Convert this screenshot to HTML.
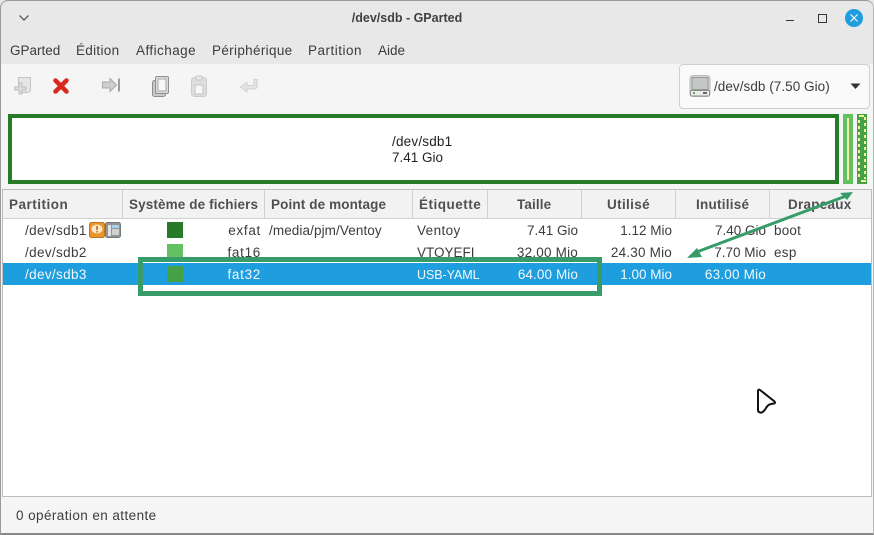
<!DOCTYPE html>
<html><head><meta charset="utf-8">
<style>
html,body{margin:0;padding:0;background:#fff}
#w{position:relative;width:874px;height:535px;overflow:hidden;background:#f5f5f5;font-family:"Liberation Sans",sans-serif;font-size:13.5px;color:#3c3c3c}
#w div,#w span{position:absolute;white-space:nowrap}
.t{line-height:16px;height:16px}
.r{text-align:right}
.h{font-weight:bold;color:#505050;font-size:13.5px;letter-spacing:.12px}
.s{border-right:1px solid #d0d0d0;top:190px;height:28px;width:0}
.w{color:#f4f8fb}
</style></head><body>
<div id="w">
<div style="left:0;top:0;width:874px;height:64px;background:#e8e8e8"></div>
<div style="left:0;top:64px;width:874px;height:471px;background:#f5f5f5"></div>

<svg style="position:absolute;left:17px;top:13px" width="14" height="10"><path d="M2.5 2.5L7 7L11.5 2.5" fill="none" stroke="#4a4a4a" stroke-width="1.2"/></svg>
<div class="t" style="left:0;top:10px;width:814px;text-align:center;font-weight:bold;font-size:12.5px;color:#404040">/dev/sdb - GParted</div>
<div style="left:786px;top:20px;width:8px;height:1px;background:#333"></div>
<div style="left:818px;top:14px;width:7px;height:7px;border:1px solid #333"></div>
<svg style="position:absolute;left:845px;top:9px" width="18" height="18"><circle cx="9" cy="9" r="9" fill="#1e9ede"/><path d="M5.5 5.5L12.5 12.5M12.5 5.5L5.5 12.5" stroke="#fff" stroke-width="1.1"/></svg>

<div class="t" style="left:10px;top:43px">GParted</div>
<div class="t" style="left:76px;top:43px;letter-spacing:.3px">Édition</div>
<div class="t" style="left:136px;top:43px;letter-spacing:.45px">Affichage</div>
<div class="t" style="left:212px;top:43px;letter-spacing:.33px">Périphérique</div>
<div class="t" style="left:308px;top:43px;letter-spacing:.5px">Partition</div>
<div class="t" style="left:378px;top:43px">Aide</div>

<svg style="position:absolute;left:12px;top:75px" width="20" height="20"><path d="M6.5 2.5H18.500V15.500C18 17 16 17.500 14 17.500H10V13.500H6.500Z" fill="#e6e6e6" stroke="#c4c4c4"/><path d="M7 8V12H2.500V15H7V19H10V15H14V12H10V8Z" fill="#dcdcdc" stroke="#bebebe"/></svg>
<svg style="position:absolute;left:52px;top:77px" width="18" height="18"><path d="M3.500 3.500L14.500 14.500M14.500 3.500L3.500 14.500" stroke="#d9281e" stroke-width="4.500" stroke-linecap="round"/></svg>
<svg style="position:absolute;left:101px;top:76px" width="20" height="18"><path d="M1.500 6H9V2.500L15.500 9L9 15.500V12H1.500Z" fill="#cfcfcf" stroke="#a8a8a8"/><rect x="17" y="2.500" width="2" height="13" fill="#9e9e9e"/></svg>
<svg style="position:absolute;left:151px;top:75px" width="20" height="23"><rect x="1.500" y="5.500" width="13" height="16" rx="2" fill="#c8c8c8" stroke="#8f8f8f"/><rect x="4.500" y="1.500" width="13" height="17" rx="1.500" fill="#dcdcdc" stroke="#8f8f8f"/><rect x="7" y="4" width="8" height="12" fill="#f7f7f7" stroke="#a8a8a8"/></svg>
<svg style="position:absolute;left:190px;top:75px" width="18" height="23"><rect x="1.500" y="2.500" width="15" height="19" rx="3" fill="#dedede" stroke="#cccccc"/><rect x="6" y="1" width="6" height="4" rx="1" fill="#ececec" stroke="#c4c4c4"/><rect x="5" y="10" width="8" height="9" fill="#f8f8f8" stroke="#c4c4c4"/></svg>
<svg style="position:absolute;left:239px;top:78px" width="20" height="16"><path d="M15 1.500H18V8C18 10 17 11 15 11H8V14L1.500 9L8 4.500V7.500H15Z" fill="#e4e4e4" stroke="#d0d0d0"/></svg>

<div style="left:679px;top:64px;width:189px;height:43px;background:#fafafa;border:1px solid #cfcfcf;border-radius:4px"></div>
<svg style="position:absolute;left:689px;top:75px" width="22" height="22"><rect x="1" y="0.500" width="20" height="21" rx="3" fill="#d4d4d4" stroke="#bbb"/><rect x="3" y="2.500" width="16" height="12" fill="#c4c8c4" stroke="#999"/><rect x="1" y="15" width="20" height="6.500" rx="1.500" fill="#8a8a8a"/><rect x="2" y="16" width="18" height="4.500" fill="#ececec"/><rect x="4" y="17" width="2" height="2" fill="#5cae4a"/><rect x="14" y="17" width="4" height="2" fill="#666"/></svg>
<div class="t" style="left:714px;top:79px;letter-spacing:.05px">/dev/sdb (7.50 Gio)</div>
<svg style="position:absolute;left:850px;top:83px" width="12" height="8"><path d="M0.500 0.500H10.500L5.500 6Z" fill="#333"/></svg>

<div style="left:8px;top:114px;width:823px;height:62px;background:#fff;border:4px solid #277a27"></div>
<div class="t" style="left:392px;top:134px;color:#222;letter-spacing:.2px">/dev/sdb1</div>
<div class="t" style="left:392px;top:150px;color:#222">7.41 Gio</div>
<div style="left:843px;top:114px;width:10px;height:70px;background:#62c262"></div>
<div style="left:847px;top:118px;width:2px;height:62px;background:#f6f0a0"></div>
<div style="left:857px;top:114px;width:10px;height:70px;background:#46a046"></div>
<svg style="position:absolute;left:857px;top:114px" width="10" height="70"><path d="M2 2H7M4 67H9" stroke="#f6f0a0" stroke-width="2"/><path d="M2 6V65" stroke="#f6f0a0" stroke-width="2" stroke-dasharray="3 3"/><path d="M8 3V65" stroke="#f6f0a0" stroke-width="2" stroke-dasharray="3 3"/></svg>

<div style="left:2px;top:189px;width:868px;height:306px;background:#fff;border:1px solid #bdbdbd"></div>
<div style="left:3px;top:190px;width:868px;height:28px;background:#f2f2f2;border-bottom:1px solid #d0d0d0"></div>
<div class="s" style="left:122px"></div>
<div class="s" style="left:264px"></div>
<div class="s" style="left:412px"></div>
<div class="s" style="left:487px"></div>
<div class="s" style="left:581px"></div>
<div class="s" style="left:675px"></div>
<div class="s" style="left:769px"></div>

<div class="t h" style="left:9px;top:197px;letter-spacing:.5px">Partition</div>
<div class="t h" style="left:129px;top:197px">Système de fichiers</div>
<div class="t h" style="left:271px;top:197px">Point de montage</div>
<div class="t h" style="left:419px;top:197px;letter-spacing:.5px">Étiquette</div>
<div class="t h" style="left:517px;top:197px">Taille</div>
<div class="t h" style="left:607px;top:197px;letter-spacing:.35px">Utilisé</div>
<div class="t h" style="left:696px;top:197px;letter-spacing:.25px">Inutilisé</div>
<div class="t h" style="left:788px;top:197px;letter-spacing:.25px">Drapeaux</div>

<div style="left:3px;top:263px;width:868px;height:22px;background:#1e9ede"></div>

<div class="t" style="left:25px;top:223px;letter-spacing:.35px">/dev/sdb1</div>
<svg style="position:absolute;left:89px;top:222px" width="33" height="16"><rect x="0.500" y="0.500" width="15" height="15" rx="2" fill="#e9952c" stroke="#c07518"/><ellipse cx="8" cy="7" rx="5.500" ry="4.500" fill="#f8e8c8"/><rect x="7.300" y="4" width="1.500" height="4" fill="#c05a10"/><rect x="7.300" y="9" width="1.500" height="1.500" fill="#c05a10"/><rect x="16.500" y="0.500" width="15" height="15" rx="2" fill="#8d9599" stroke="#70787c"/><rect x="19" y="3" width="3" height="11" fill="#e4e4e4"/><rect x="23" y="3" width="7" height="3" fill="#a8d0e6"/><rect x="23" y="7" width="7" height="6" fill="#d0d0d0"/></svg>
<div class="t" style="left:25px;top:245px;letter-spacing:.35px">/dev/sdb2</div>
<div class="t w" style="left:25px;top:267px;letter-spacing:.35px">/dev/sdb3</div>

<div style="left:167px;top:222px;width:16px;height:16px;background:#277a27"></div>
<div style="left:167px;top:244px;width:16px;height:16px;background:#62c262"></div>
<div style="left:167px;top:266px;width:16px;height:16px;background:#46a046"></div>

<div class="t r" style="left:200px;width:61px;top:223px;letter-spacing:.7px">exfat</div>
<div class="t r" style="left:200px;width:61px;top:245px;letter-spacing:.7px">fat16</div>
<div class="t r w" style="left:200px;width:61px;top:267px;letter-spacing:.7px">fat32</div>

<div class="t" style="left:269px;top:223px;letter-spacing:.1px">/media/pjm/Ventoy</div>

<div class="t" style="left:417px;top:223px;letter-spacing:.4px">Ventoy</div>
<div class="t" style="left:417px;top:245px">VTOYEFI</div>
<div class="t w" style="left:417px;top:267px;font-size:12.5px;letter-spacing:-.05px">USB-YAML</div>

<div class="t r" style="left:490px;width:88px;top:223px">7.41 Gio</div>
<div class="t r" style="left:490px;width:88px;top:245px;letter-spacing:.2px">32.00 Mio</div>
<div class="t r w" style="left:490px;width:88px;top:267px;letter-spacing:.1px">64.00 Mio</div>

<div class="t r" style="left:584px;width:88px;top:223px">1.12 Mio</div>
<div class="t r" style="left:584px;width:88px;top:245px;letter-spacing:.2px">24.30 Mio</div>
<div class="t r w" style="left:584px;width:88px;top:267px">1.00 Mio</div>

<div class="t r" style="left:678px;width:88px;top:223px">7.40 Gio</div>
<div class="t r" style="left:678px;width:88px;top:245px">7.70 Mio</div>
<div class="t r w" style="left:678px;width:88px;top:267px;letter-spacing:.2px">63.00 Mio</div>

<div class="t" style="left:774px;top:223px;letter-spacing:.2px">boot</div>
<div class="t" style="left:774px;top:245px;letter-spacing:.3px">esp</div>

<div style="left:138px;top:257px;width:454px;height:29px;border:5px solid #379c69"></div>

<svg style="position:absolute;left:680px;top:186px" width="180" height="80"><path d="M14 67L166 10" stroke="#379c69" stroke-width="3"/><path d="M7 72L17 62L22 71Z" fill="#379c69"/><path d="M173 6L160 7L167 14Z" fill="#379c69"/></svg>

<svg style="position:absolute;left:752px;top:385px" width="30" height="32"><path d="M6 6Q6 4 8 5L22 16Q24 18 22 18.500C18 19 16 19.500 14 23C12 26.500 10 28 8 27.500Q6 27 6 25Z" fill="#fff" stroke="#111" stroke-width="2" stroke-linejoin="round"/></svg>

<div style="left:0;top:497px;width:874px;height:36px;background:#f5f5f5"></div>
<div class="t" style="left:16px;top:508px;letter-spacing:.42px">0 opération en attente</div>

<div style="left:0;top:0;width:872px;height:532px;border:1px solid #9a9a9a;border-bottom:2px solid #8a8a8a;border-radius:8px 8px 0 0;border-right:1px solid #b8b8b8"></div>
</div>
</body></html>
